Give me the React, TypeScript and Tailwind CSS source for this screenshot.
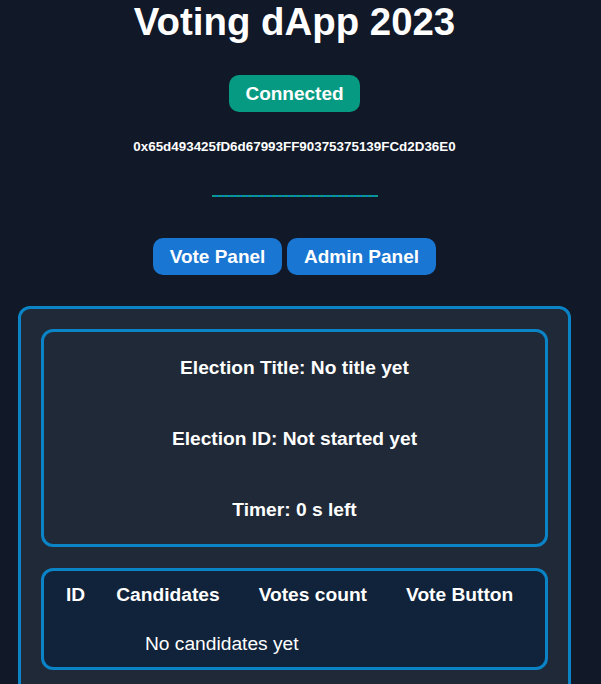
import React from "react";

const columns = ["ID", "Candidates", "Votes count", "Vote Button"];

export default function App() {
  return (
    <div className="min-h-screen bg-[#111827] font-['Liberation_Sans',Arial,sans-serif] text-white">
      <div className="w-[589px] flex flex-col items-center">
        {/* Header */}
        <h1 className="text-[38.4px] leading-[44px] font-bold">Voting dApp 2023</h1>

        <button className="mt-[31px] h-[37px] w-[131px] rounded-[10px] bg-[#079a82] text-[19px] font-bold leading-none">
          Connected
        </button>

        <h5 className="mt-[27px] text-[13.4px] leading-[16px] font-bold">
          0x65d493425fD6d67993FF90375375139FCd2D36E0
        </h5>

        <div className="mt-[40px] w-[166px] h-[2px] bg-[repeating-linear-gradient(90deg,#0a9a8c_0_4px,#0a80c4_4px_6px)]" />

        {/* Panel switch */}
        <div className="mt-[41px] flex gap-[5px]">
          <button className="h-[37px] w-[129px] rounded-[10px] bg-[#1976d2] text-[19px] font-bold leading-none">
            Vote Panel
          </button>
          <button className="h-[37px] w-[149px] rounded-[10px] bg-[#1976d2] text-[19px] font-bold leading-none">
            Admin Panel
          </button>
        </div>

        {/* Vote panel */}
        <div className="mt-[31px] w-[553px] rounded-[12px] border-[3px] border-[#0a84c6] bg-[#1f2937] p-[20px] pb-[40px] flex flex-col gap-[21px]">
          <div className="rounded-[12px] border-[3px] border-[#0a84c6] bg-[#1f2937] pt-[25px] pb-[24px] flex flex-col items-center gap-[50px] text-[19.2px] leading-[21px] font-bold">
            <h3>Election Title: No title yet</h3>
            <h3>Election ID: Not started yet</h3>
            <h3>Timer: 0 s left</h3>
          </div>

          <div className="rounded-[12px] border-[3px] border-[#0a84c6] bg-[#10233a] pt-[13px] pb-[12px] text-[19.2px] leading-[22px]">
            <div className="flex pl-[22px] font-bold">
              {columns.map((c, i) => (
                <span
                  key={c}
                  className={i === 0 ? "" : i === 1 ? "ml-[31px]" : "ml-[39px]"}
                >
                  {c}
                </span>
              ))}
            </div>
            <div className="mt-[27px] pl-[101px]">No candidates yet</div>
          </div>
        </div>
      </div>
    </div>
  );
}
